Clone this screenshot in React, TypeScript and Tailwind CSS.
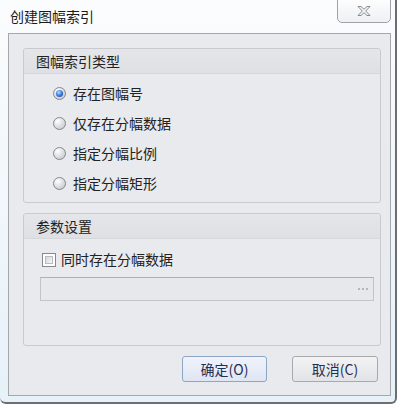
import React from 'react';

const font = { fontFamily: '"Noto Sans CJK SC", "Noto Sans", sans-serif' };

function Radio({ checked }: { checked?: boolean }) {
  return (
    <svg width="13" height="13" viewBox="0 0 13 13" className="shrink-0">
      <defs>
        <radialGradient id="rbg" cx="0.35" cy="0.3" r="0.8">
          <stop offset="0" stopColor="#ffffff" />
          <stop offset="1" stopColor="#c4c6ca" />
        </radialGradient>
        <radialGradient id="rdot" cx="0.4" cy="0.35" r="0.7">
          <stop offset="0" stopColor="#b9dcff" />
          <stop offset="0.6" stopColor="#3c7fe0" />
          <stop offset="1" stopColor="#1f56b8" />
        </radialGradient>
      </defs>
      <circle cx="6.5" cy="6.5" r="6" fill="url(#rbg)" stroke="#85888d" strokeWidth="1" />
      {checked && <circle cx="6.5" cy="6.5" r="3.6" fill="url(#rdot)" />}
    </svg>
  );
}

function Checkbox() {
  return (
    <div className="w-[14px] h-[14px] shrink-0 border border-[#85888d] bg-white p-[2px]">
      <div className="w-full h-full border border-[#b9bbbf] bg-gradient-to-br from-[#d6d7da] to-[#f6f6f7]" />
    </div>
  );
}

function GroupHeader({ title }: { title: string }) {
  return (
    <div className="h-[25px] flex items-center pl-[12px] bg-gradient-to-b from-[#e5e6ea] to-[#dfe0e4] border-b border-[#d6d7db] rounded-t-[3px] text-[14px] text-[#222]">
      {title}
    </div>
  );
}

export default function App() {
  const options = ['存在图幅号', '仅存在分幅数据', '指定分幅比例', '指定分幅矩形'];

  return (
    <div className="w-[402px] h-[408px] bg-white overflow-hidden" style={font}>
      <div className="w-[397px] h-[404px] flex flex-col border-r-2 border-b-2 border-[#6b6f75] rounded-br-[6px] rounded-bl-[6px] bg-gradient-to-b from-[#fbfcfd] via-[#f1f7fb] to-[#e6f1f8]">
        {/* title bar */}
        <div className="h-[33px] flex items-start justify-between">
          <div className="pl-[10px] pt-[7px] text-[14px] leading-[18px] text-[#1a1a1a]">创建图幅索引</div>
          <div className="mr-[4px] mt-[-1px] w-[54px] h-[24px] flex items-center justify-center border border-[#9ea3a9] rounded-b-[5px] bg-gradient-to-b from-[#fdfdfd] to-[#eef0f3]">
            <svg width="16" height="12" viewBox="0 0 16 12">
              <path
                d="M2 1.5 L5 1.5 L8 4.3 L11 1.5 L14 1.5 L9.7 6 L14 10.5 L11 10.5 L8 7.7 L5 10.5 L2 10.5 L6.3 6 Z"
                fill="#f4f4f4"
                stroke="#8a8e94"
                strokeWidth="1"
                strokeLinejoin="round"
              />
            </svg>
          </div>
        </div>

        {/* client area */}
        <div className="ml-[8px] w-[383px] h-[363px] border border-[#a4a7ac] bg-[#e9eaee] px-[14px] pt-[14px] flex flex-col">
          <div className="w-[358px] h-[155px] border border-[#c9cacf] rounded-[3px] flex flex-col">
            <GroupHeader title="图幅索引类型" />
            <div className="flex flex-col pl-[29px] pt-[13px] gap-[17px]">
              {options.map((o, i) => (
                <div key={o} className="flex items-center gap-[7px] h-[13px] text-[14px] text-[#222]">
                  <Radio checked={i === 0} />
                  <span className="leading-[13px]">{o}</span>
                </div>
              ))}
            </div>
          </div>

          <div className="mt-[10px] w-[358px] h-[133px] border border-[#c9cacf] rounded-[3px] flex flex-col">
            <GroupHeader title="参数设置" />
            <div className="flex items-center gap-[5px] pl-[18px] mt-[13px] h-[15px] text-[14px] text-[#222]">
              <Checkbox />
              <span>同时存在分幅数据</span>
            </div>
            <div className="ml-[16px] mt-[10px] w-[334px] h-[24px] border border-[#c2c4c8] border-t-[#adb0b5] bg-[#e7e8eb] flex items-center justify-end gap-[2px] pr-[5px]">
              <div className="w-[2px] h-[2px] bg-[#b4b6ba]" />
              <div className="w-[2px] h-[2px] bg-[#b4b6ba]" />
              <div className="w-[2px] h-[2px] bg-[#b4b6ba]" />
            </div>
          </div>

          <div className="mt-[10px] flex justify-end gap-[25px]">
            <button className="w-[85px] h-[26px] rounded-[3px] border border-[#8ea5c6] bg-gradient-to-b from-[#f0f3fb] to-[#dfe5f3] text-[14px] text-[#1f2f55]">
              确定(O)
            </button>
            <button className="w-[86px] h-[26px] rounded-[3px] border border-[#a7a9ad] bg-gradient-to-b from-[#f3f3f4] to-[#e2e3e6] text-[14px] text-[#1f2f55] mr-[-2px]">
              取消(C)
            </button>
          </div>
        </div>
      </div>
    </div>
  );
}
